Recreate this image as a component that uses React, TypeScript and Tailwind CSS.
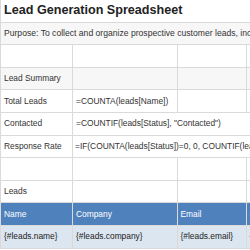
const cell = "border-r border-b border-[#dadada] px-[3px] flex items-center whitespace-nowrap overflow-hidden";

const App = () => {
  return (
    <div className="w-[250px] h-[250px] overflow-hidden bg-white font-['Liberation_Sans',Arial,sans-serif] text-[#333] text-[8.4px]">
      <div className="grid grid-cols-[72px_104.5px_69px_100px] auto-rows-[22.6px] border-l border-[#dadada] w-max">
        {/* Title */}
        <div className={`${cell} col-span-4 text-[12.6px] font-bold text-[#222]`}>Lead Generation Spreadsheet</div>
        <div className={`${cell} col-span-4 bg-[#f7f7f7] text-[8.6px]`}>
          Purpose: To collect and organize prospective customer leads, including contact details, status and follow-up notes.
        </div>

        <div className={cell}></div>
        <div className={cell}></div>
        <div className={cell}></div>
        <div className={cell}></div>

        {/* Summary */}
        <div className={`${cell} bg-[#f7f7f7]`}>Lead Summary</div>
        <div className={`${cell} bg-[#f7f7f7]`}></div>
        <div className={`${cell} bg-[#f7f7f7]`}></div>
        <div className={`${cell} bg-[#f7f7f7]`}></div>

        <div className={cell}>Total Leads</div>
        <div className={cell}>=COUNTA(leads[Name])</div>
        <div className={cell}></div>
        <div className={cell}></div>

        <div className={cell}>Contacted</div>
        <div className={`${cell} col-span-3`}>=COUNTIF(leads[Status], "Contacted")</div>

        <div className={cell}>Response Rate</div>
        <div className={`${cell} col-span-3 pl-[2px]`}>
          =IF(COUNTA(leads[Status])=0, 0, COUNTIF(leads[Status], "Responded")/COUNTA(leads[Status]))
        </div>

        <div className={cell}></div>
        <div className={cell}></div>
        <div className={cell}></div>
        <div className={cell}></div>

        {/* Leads table */}
        <div className={cell}>Leads</div>
        <div className={cell}></div>
        <div className={cell}></div>
        <div className={cell}></div>

        {["Name", "Company", "Email", "Phone"].map((h) => (
          <div key={h} className={`${cell} bg-[#4f81bd] text-white border-[#a9c0dd]`}>
            {h}
          </div>
        ))}

        {["{#leads.name}", "{#leads.company}", "{#leads.email}", "{#leads.phone}"].map((d) => (
          <div key={d} className={`${cell} bg-[#dce6f1] text-[#222] border-[#c9d3df]`}>
            {d}
          </div>
        ))}
      </div>
    </div>
  );
};

export default App;
